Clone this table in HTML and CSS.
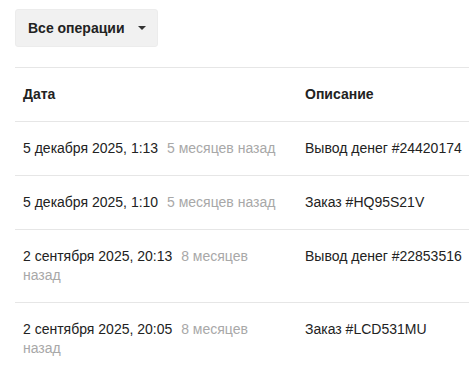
FILE: index.html
```html
<!DOCTYPE html>
<html lang="ru">
<head>
<meta charset="utf-8">
<link rel="stylesheet" href="styles.css">
</head>
<body>
<div class="page">
  <div class="toolbar">
    <button class="filter-btn" type="button">
      <span class="filter-label">Все операции</span>
      <span class="caret"></span>
    </button>
  </div>
  <div class="table-wrap">
    <table class="ops">
      <colgroup>
        <col class="col-date">
        <col class="col-desc">
      </colgroup>
      <thead>
        <tr><th>Дата</th><th>Описание</th></tr>
      </thead>
      <tbody>
        <tr>
          <td>5 декабря 2025, 1:13 <span class="ago">5 месяцев назад</span></td>
          <td>Вывод денег #24420174</td>
        </tr>
        <tr>
          <td>5 декабря 2025, 1:10 <span class="ago">5 месяцев назад</span></td>
          <td>Заказ #HQ95S21V</td>
        </tr>
        <tr>
          <td>2 сентября 2025, 20:13 <span class="ago">8 месяцев назад</span></td>
          <td>Вывод денег #22853516</td>
        </tr>
        <tr>
          <td>2 сентября 2025, 20:05 <span class="ago">8 месяцев назад</span></td>
          <td>Заказ #LCD531MU</td>
        </tr>
      </tbody>
    </table>
  </div>
</div>
</body>
</html>
```

FILE: styles.css
```css
html, body {
  margin: 0;
  padding: 0;
  background: #fff;
}
body {
  font-family: "Liberation Sans", Arial, sans-serif;
  font-size: 14px;
  color: #222;
  overflow: hidden;
}
.page {
  padding: 9px 0 0 15px;
}
.toolbar {
  display: flex;
  margin-bottom: 20px;
}
.filter-btn {
  display: flex;
  align-items: center;
  height: 38px;
  width: 143px;
  padding: 0 0 0 12px;
  border: 1px solid #ececec;
  border-radius: 3px;
  background: #f1f1f1;
  font-family: inherit;
  font-size: 14px;
  font-weight: bold;
  color: #222;
  cursor: pointer;
}
.filter-label {
  line-height: 20px;
}
.caret {
  margin-left: 13px;
  width: 0;
  height: 0;
  border-left: 4px solid transparent;
  border-right: 4px solid transparent;
  border-top: 4px solid #333;
}
.table-wrap {
  overflow: hidden;
}
.ops {
  width: 640px;
  border-collapse: collapse;
  table-layout: fixed;
}
.col-date { width: 282px; }
.ops th, .ops td {
  text-align: left;
  vertical-align: top;
  padding: 17px 8px;
  line-height: 19px;
  border-top: 1px solid #e6e6e6;
}
.ops th {
  font-weight: bold;
}
.ago {
  color: #a8a8a8;
  margin-left: 5px;
}
```
